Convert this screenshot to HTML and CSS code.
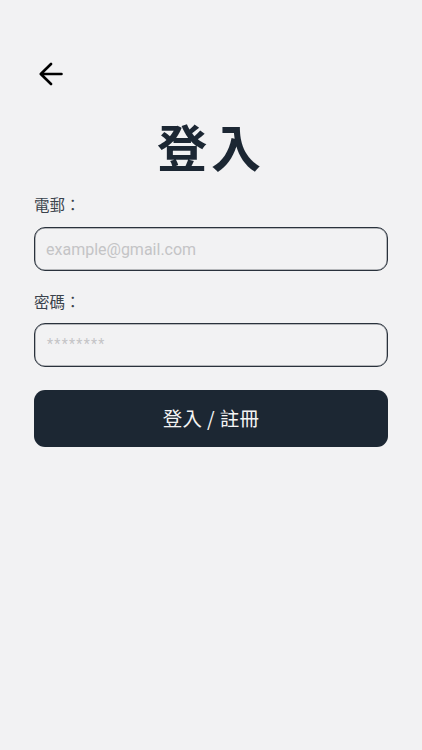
FILE: index.html
```html
<!DOCTYPE html>
<html>
<head>
    <title>登入</title>
    <link rel="stylesheet" href="styles.css">
</head>
<body>
    <section class="page">
        <svg class="back" width="24" height="24" viewBox="0 0 24 24" fill="none" stroke="#000" stroke-width="2.6" stroke-linecap="round" stroke-linejoin="round">
            <path d="M22.5 12H2M12 2L1.8 12L12 22"/>
        </svg>
        <h1 class="title">登入</h1>
        <form class="form">
            <label class="label">電郵：</label>
            <div class="field"><span class="hint">example@gmail.com</span></div>
            <label class="label label-second">密碼：</label>
            <div class="field"><span class="hint hint-stars">********</span></div>
            <button class="submit" type="button">登入 / 註冊</button>
        </form>
    </section>
</body>
</html>
```

FILE: styles.css
```css
body {
    margin: 0;
    background-color: #f2f2f3;
    font-family: "Noto Sans CJK TC", "Inter", sans-serif;
    color: #1c2733;
}
.page {
    height: 750px;
    box-sizing: border-box;
    padding: 62px 34px 0 34px;
    overflow: hidden;
}
.back {
    display: block;
    margin-left: 5px;
}
.title {
    margin: 25px 0 0 0;
    height: 73px;
    line-height: 68px;
    text-align: center;
    font-size: 50px;
    font-weight: 700;
    letter-spacing: 4px;
    color: #1c2733;
}
.form {
    display: flex;
    flex-direction: column;
}
.label {
    height: 22px;
    line-height: 22px;
    margin-top: 9px;
    font-size: 15.5px;
    color: #3a424c;
}
.label-second {
    margin-top: 18px;
    line-height: 24px;
}
.field {
    display: flex;
    align-items: center;
    height: 44px;
    margin-top: 12px;
    padding: 0 11px;
    border: 1px solid #2a323c;
    border-radius: 11px;
    box-shadow: inset 0 0 0 0.5px rgba(40, 48, 58, 0.6);
    box-sizing: border-box;
}
.hint {
    font-family: "Roboto", sans-serif;
    font-size: 16px;
    color: #c4c4c6;
}
.hint-stars {
    font-size: 14px;
    letter-spacing: 1.3px;
    margin-top: -2px;
    margin-left: 1px;
}
.submit {
    height: 57px;
    margin-top: 23px;
    padding-bottom: 3px;
    border: none;
    border-radius: 11px;
    background-color: #1c2733;
    color: #f4f4f4;
    font-family: "Noto Sans CJK TC", sans-serif;
    font-size: 19.5px;
    letter-spacing: 0.3px;
}
```
